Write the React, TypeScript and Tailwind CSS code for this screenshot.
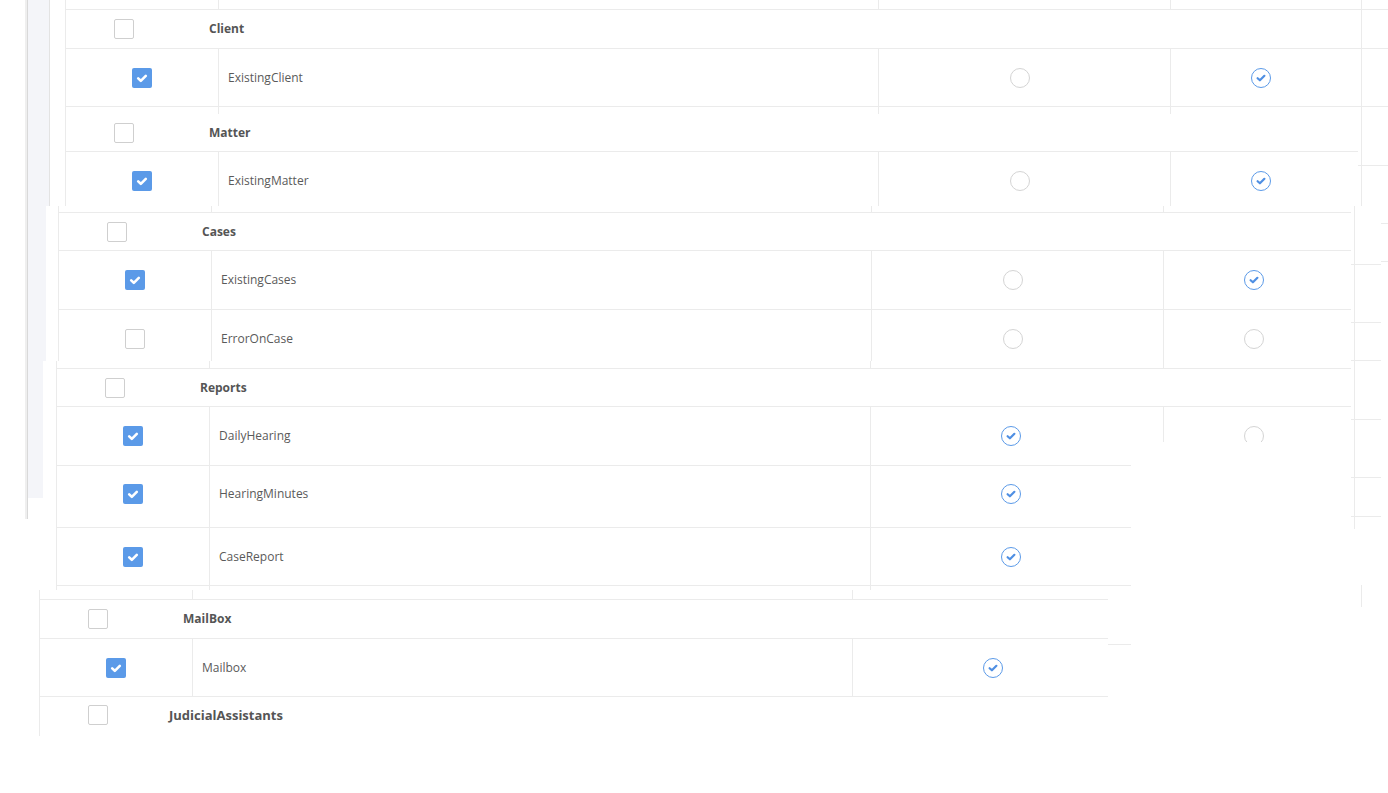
import React from "react";

type P = { className?: string; children?: React.ReactNode };

const Cell = ({ className = "", children }: P) => (
  <div className={"flex h-full shrink-0 items-center border-l border-[#ebebeb] " + className}>{children}</div>
);

function Box({ on }: { on?: boolean }) {
  return on ? (
    <span className="flex h-5 w-5 shrink-0 items-center justify-center rounded-[2px] bg-[#5b9ae8]">
      <svg width="20" height="20" viewBox="0 0 20 20">
        <path d="M6.2 10.4 L8.8 12.8 L13.8 7.8" fill="none" stroke="#ffffff" strokeWidth="2.6" strokeLinecap="round" strokeLinejoin="round" />
      </svg>
    </span>
  ) : (
    <span className="block h-5 w-5 shrink-0 rounded-[2px] border border-[#cfcfcf] bg-white" />
  );
}

function Radio({ on }: { on?: boolean }) {
  return on ? (
    <span className="flex h-5 w-5 shrink-0 items-center justify-center rounded-full border border-[#5b9ae8] bg-white">
      <svg width="18" height="18" viewBox="0 0 18 18">
        <path d="M5.6 9.2 L7.9 11.3 L12.4 6.8" fill="none" stroke="#4f8fe3" strokeWidth="2.2" strokeLinecap="round" strokeLinejoin="round" />
      </svg>
    </span>
  ) : (
    <span className="block h-5 w-5 shrink-0 rounded-full border border-[#d4d4d4] bg-white" />
  );
}

const Label = ({ children }: P) => <span className="text-[12px] leading-none text-[#5a5a5a]">{children}</span>;
const Group = ({ className = "ml-[75px] text-[12px]", children }: P) => (
  <span className={"font-bold leading-none text-[#555555] " + className}>{children}</span>
);

const Line = ({ className = "" }: P) => <div className={"absolute bg-[#ebebeb] " + className} />;

export default function App() {
  return (
    <div
      className="relative h-[793px] w-[1388px] overflow-hidden bg-white"
      style={{ fontFamily: '"Open Sans", "Liberation Sans", sans-serif' }}
    >
      {/* sidebar behind */}
      <div className="absolute left-[25px] top-0 h-[519px] w-[2px] bg-[#efefef]" />
      <div className="absolute left-[27px] top-0 h-[519px] w-px bg-[#d9d9d9]" />
      <div className="absolute left-[28px] top-0 h-[498px] w-[21px] bg-[#f4f5f9]" />
      <div className="absolute left-[49px] top-0 h-[498px] w-px bg-[#e3e3e3]" />

      {/* Fragment A */}
      <div className="relative ml-[50px] w-[1338px] bg-white pl-[15px]">
        <div className="flex h-[10px] border-b border-[#ebebeb]">
          <Cell className="w-[153px]" />
          <Cell className="w-[660px]" />
          <Cell className="w-[292px]" />
          <Cell className="w-[191px]" />
          <Cell className="flex-1" />
        </div>
        <div className="flex h-[39px] border-b border-[#ebebeb]">
          <Cell className="w-[1296px] pl-[48px]">
            <Box />
            <Group>Client</Group>
          </Cell>
          <Cell className="flex-1" />
        </div>
        <div className="flex h-[58px] border-b border-[#ebebeb]">
          <Cell className="w-[153px] pl-[66px]">
            <Box on />
          </Cell>
          <Cell className="w-[660px] pl-[9px]">
            <Label>ExistingClient</Label>
          </Cell>
          <Cell className="w-[292px] pl-[131px]">
            <Radio />
          </Cell>
          <Cell className="w-[191px] pl-[80px]">
            <Radio on />
          </Cell>
          <Cell className="flex-1" />
        </div>
        <div className="relative flex h-[45px]">
          <Cell className="relative w-[1296px] pl-[48px] pt-[6px]">
            <Box />
            <Group>Matter</Group>
            <div className="absolute -left-px bottom-0 h-px w-[1293px] bg-[#ebebeb]" />
          </Cell>
          <Cell className="flex-1" />
          <Line className="left-[153px] top-0 h-[7px] w-px" />
          <Line className="left-[813px] top-0 h-[7px] w-px" />
          <Line className="left-[1105px] top-0 h-[7px] w-px" />
        </div>
        <div className="flex h-[57px]">
          <Cell className="w-[153px] pl-[66px]">
            <Box on />
          </Cell>
          <Cell className="w-[660px] pl-[9px]">
            <Label>ExistingMatter</Label>
          </Cell>
          <Cell className="w-[292px] pl-[131px]">
            <Radio />
          </Cell>
          <Cell className="w-[191px] pl-[80px]">
            <Radio on />
          </Cell>
          <Cell className="flex-1" />
        </div>
      </div>

      {/* Fragment B */}
      <div className="relative -mt-[3px] ml-[46px] w-[1342px] bg-white pl-[12px]">
        <div className="flex h-[7px] w-[1293px] border-b border-[#ebebeb]">
          <Cell className="w-[153px]" />
          <Cell className="w-[660px]" />
          <Cell className="w-[292px]" />
          <Cell className="w-[188px]" />
        </div>
        <div className="flex h-[38px] w-[1293px] border-b border-[#ebebeb]">
          <Cell className="w-[1293px] pl-[48px]">
            <Box />
            <Group>Cases</Group>
          </Cell>
        </div>
        <div className="flex h-[59px] w-[1293px] border-b border-[#ebebeb]">
          <Cell className="w-[153px] pl-[66px]">
            <Box on />
          </Cell>
          <Cell className="w-[660px] pl-[9px]">
            <Label>ExistingCases</Label>
          </Cell>
          <Cell className="w-[292px] pl-[131px]">
            <Radio />
          </Cell>
          <Cell className="w-[188px] pl-[80px]">
            <Radio on />
          </Cell>
        </div>
        <div className="flex h-[57px] w-[1293px]">
          <Cell className="w-[153px] pl-[66px]">
            <Box />
          </Cell>
          <Cell className="w-[660px] pl-[9px]">
            <Label>ErrorOnCase</Label>
          </Cell>
          <Cell className="w-[292px] pl-[131px]">
            <Radio />
          </Cell>
          <Cell className="w-[188px] pl-[80px]">
            <Radio />
          </Cell>
        </div>
      </div>

      {/* Fragment C */}
      <div className="relative -mt-[6px] ml-[43px] w-[1345px] bg-white pl-[13px]">
        <div className="flex h-[8px] w-[1295px] border-b border-[#ebebeb]">
          <Cell className="w-[153px]" />
          <Cell className="w-[661px]" />
          <Cell className="w-[293px]" />
          <Cell className="w-[188px]" />
        </div>
        <div className="flex h-[38px] w-[1295px] border-b border-[#ebebeb]">
          <Cell className="w-[1295px] pl-[48px]">
            <Box />
            <Group>Reports</Group>
          </Cell>
        </div>
        <div className="flex h-[59px] w-[1295px] border-b border-[#ebebeb]">
          <Cell className="w-[153px] pl-[66px]">
            <Box on />
          </Cell>
          <Cell className="w-[661px] pl-[9px]">
            <Label>DailyHearing</Label>
          </Cell>
          <Cell className="w-[293px] pl-[130px]">
            <Radio on />
          </Cell>
          <Cell className="w-[188px] pl-[80px]">
            <Radio />
          </Cell>
        </div>
        <div className="flex h-[62px] w-[1295px] border-b border-[#ebebeb]">
          <Cell className="w-[153px] pb-[5px] pl-[66px]">
            <Box on />
          </Cell>
          <Cell className="w-[661px] pb-[5px] pl-[9px]">
            <Label>HearingMinutes</Label>
          </Cell>
          <Cell className="w-[293px] pb-[5px] pl-[130px]">
            <Radio on />
          </Cell>
          <Cell className="w-[188px]" />
        </div>
        <div className="flex h-[58px] w-[1295px] border-b border-[#ebebeb]">
          <Cell className="w-[153px] pl-[66px]">
            <Box on />
          </Cell>
          <Cell className="w-[661px] pl-[9px]">
            <Label>CaseReport</Label>
          </Cell>
          <Cell className="w-[293px] pl-[130px]">
            <Radio on />
          </Cell>
          <Cell className="w-[188px]" />
        </div>
        <div className="flex h-[4px] w-[1295px]">
          <Cell className="w-[153px]" />
          <Cell className="w-[661px]" />
          <Cell className="w-[293px]" />
        </div>
        <div className="absolute left-[1088px] top-[81px] h-[149px] w-[221px] bg-white" />
      </div>

      {/* Fragment D */}
      <div className="relative ml-[39px] w-[1069px] overflow-hidden bg-white">
        <div className="flex h-[10px] w-[1296px] border-b border-[#ebebeb]">
          <Cell className="w-[153px]" />
          <Cell className="w-[660px]" />
          <Cell className="w-[292px]" />
          <Cell className="w-[191px]" />
        </div>
        <div className="flex h-[39px] w-[1296px] border-b border-[#ebebeb]">
          <Cell className="w-[1296px] pl-[48px]">
            <Box />
            <Group>MailBox</Group>
          </Cell>
        </div>
        <div className="flex h-[58px] w-[1296px] border-b border-[#ebebeb]">
          <Cell className="w-[153px] pl-[66px]">
            <Box on />
          </Cell>
          <Cell className="w-[660px] pl-[9px]">
            <Label>Mailbox</Label>
          </Cell>
          <Cell className="w-[292px] pl-[130px]">
            <Radio on />
          </Cell>
          <Cell className="w-[191px]" />
        </div>
        <div className="flex h-[39px] w-[1296px]">
          <Cell className="w-[1296px] pb-[3px] pl-[48px]">
            <Box />
            <Group className="ml-[61px] text-[13px]">JudicialAssistants</Group>
          </Cell>
        </div>
      </div>

      {/* stray repaint lines */}
      <Line className="left-[1358px] top-[165px] h-px w-[30px]" />
      <Line className="left-[1354px] top-[206px] h-[323px] w-px" />
      <Line className="left-[1381px] top-[223px] h-px w-[7px]" />
      <Line className="left-[1381px] top-[261px] h-px w-[7px]" />
      <Line className="left-[1351px] top-[264px] h-px w-[30px]" />
      <Line className="left-[1351px] top-[322px] h-px w-[30px]" />
      <Line className="left-[1351px] top-[360px] h-px w-[30px]" />
      <Line className="left-[1351px] top-[419px] h-px w-[30px]" />
      <Line className="left-[1351px] top-[477px] h-px w-[30px]" />
      <Line className="left-[1351px] top-[516px] h-px w-[30px]" />
      <Line className="left-[1361px] top-[585px] h-[22px] w-px" />
      <Line className="left-[1108px] top-[644px] h-px w-[23px]" />
    </div>
  );
}
